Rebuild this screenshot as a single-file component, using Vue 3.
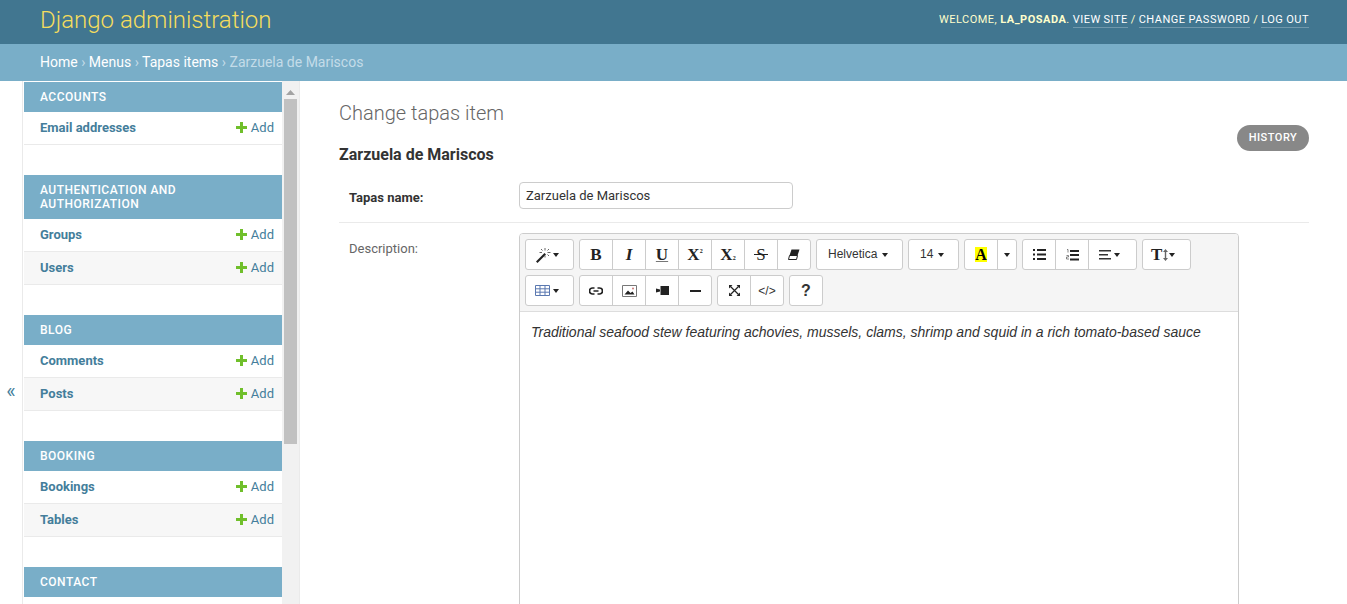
<script setup>
const modules = [
  { title: 'Accounts', rows: ['Email addresses'] },
  { title: 'Authentication and Authorization', rows: ['Groups', 'Users'] },
  { title: 'Blog', rows: ['Comments', 'Posts'] },
  { title: 'Booking', rows: ['Bookings', 'Tables'] },
  { title: 'Contact', rows: [] },
]
</script>

<template>
  <div class="page">
    <header class="top">
      <div class="brand">Django administration</div>
      <div class="tools">
        Welcome, <strong>la_posada</strong>.
        <a>View site</a> / <a>Change password</a> / <a>Log out</a>
      </div>
    </header>
    <nav class="crumbs">
      <a>Home</a><span class="sep"> › </span><a>Menus</a><span class="sep"> › </span><a>Tapas items</a><span class="sep"> › </span><span class="cur">Zarzuela de Mariscos</span>
    </nav>
    <div class="body">
      <div class="toggle"><span>«</span></div>
      <aside class="side">
        <div class="mods">
          <section v-for="m in modules" :key="m.title" class="mod">
            <h3>{{ m.title }}</h3>
            <div v-for="(r, i) in m.rows" :key="r" class="row" :class="{ alt: i % 2 === 1 }">
              <a class="name">{{ r }}</a>
              <a class="add">
                <svg width="11" height="11" viewBox="0 0 11 11"><path d="M4 0h3v4h4v3H7v4H4V7H0V4h4z" fill="#70bf2b"/></svg>
                Add
              </a>
            </div>
          </section>
        </div>
        <div class="scroll">
          <svg class="arrow" width="9" height="5" viewBox="0 0 9 5"><path d="M4.5 0L9 5H0z" fill="#a3a3a3"/></svg>
          <div class="thumb"></div>
        </div>
      </aside>
      <main class="main">
        <h1>Change tapas item</h1>
        <div class="titlebar">
          <h2>Zarzuela de Mariscos</h2>
          <a class="history">History</a>
        </div>
        <div class="frow first">
          <label class="req">Tapas name:</label>
          <input class="inp" value="Zarzuela de Mariscos" />
        </div>
        <div class="frow desc">
          <label>Description:</label>
          <div class="editor">
            <div class="bar">
              <div class="line">
                <div class="grp"><button class="b w49"><svg width="17" height="16" viewBox="0 0 17 16"><path d="M1 14.500L9.500 6l1.500 1.500L2.500 16z" fill="#222"/><path d="M10 1v2.500M10 8.500v2M4.500 5.500h2.500M12.500 5.500h3M6 2l1.500 1.500M14 2l-1.500 1.500M14 9l-1.500-1.500" stroke="#666" stroke-width="1" fill="none"/></svg><i class="caret m1"></i></button></div>
                <div class="grp">
                  <button class="b ser"><b>B</b></button>
                  <button class="b ser"><b><em>I</em></b></button>
                  <button class="b ser"><b class="ul">U</b></button>
                  <button class="b ser"><b>X</b><sup>2</sup></button>
                  <button class="b ser"><b>X</b><sub>2</sub></button>
                  <button class="b ser"><b class="st">S</b></button>
                  <button class="b"><svg width="12" height="11" viewBox="0 0 12 11"><path d="M3.500 0.500H11.500L9.500 6.500H1.500z" fill="#222"/><path d="M1.500 6.500H9.500L8.500 10.500H0.500z" fill="#fff" stroke="#222"/></svg></button>
                </div>
                <div class="grp"><button class="b w87 txt">Helvetica<i class="caret"></i></button></div>
                <div class="grp"><button class="b w51 txt">14<i class="caret"></i></button></div>
                <div class="grp">
                  <button class="b ser"><b class="hl">A</b></button>
                  <button class="b w19"><i class="caret m0"></i></button>
                </div>
                <div class="grp">
                  <button class="b"><svg width="13" height="11" viewBox="0 0 13 11"><path d="M0 0h2v2H0zM0 4.500h2v2H0zM0 9h2v2H0zM4 0h9v2H4zM4 4.500h9v2H4zM4 9h9v2H4z" fill="#222"/></svg></button>
                  <button class="b"><svg width="13" height="12" viewBox="0 0 13 12"><path d="M4 1h9v2H4zM4 5h9v2H4zM4 9.500h9v2H4z" fill="#222"/><path d="M1 0.500h1v3M0.500 6.500h2v1.500h-2v2h2.500" stroke="#555" stroke-width=".7" fill="none"/></svg></button>
                  <button class="b w49 al"><svg width="12" height="10" viewBox="0 0 12 10"><path d="M0 0h12v1.600H0zM0 4h9v1.600H0zM0 8h12v1.600H0z" fill="#333"/></svg><i class="caret"></i></button>
                </div>
                <div class="grp"><button class="b w49 ser tb"><b class="tt">T</b><svg width="5" height="12" viewBox="0 0 5 12"><path d="M2.500 0L5 3H3.200v6H5L2.500 12 0 9h1.800V3H0z" fill="#666"/></svg><i class="caret m1"></i></button></div>
              </div>
              <div class="line">
                <div class="grp"><button class="b w49"><svg width="15" height="11" viewBox="0 0 15 11"><path d="M.5.500h14v10H.5zM.5 3.800h14M.5 7.200h14M5 .500v10M10 .500v10" fill="none" stroke="#5a78b0"/></svg><i class="caret"></i></button></div>
                <div class="grp">
                  <button class="b"><svg width="14" height="8" viewBox="0 0 14 8"><path d="M5.500 1H3.500a3 3 0 000 6h2M8.500 1h2a3 3 0 010 6h-2M4.500 4h5" fill="none" stroke="#222" stroke-width="1.700"/></svg></button>
                  <button class="b"><svg width="15" height="12" viewBox="0 0 15 12"><path d="M.5.500h14v11H.5z" fill="#fff" stroke="#777"/><path d="M2.500 9.500L6 5.500l2.500 2.500 2-1.500 2 3z" fill="#222"/><circle cx="11" cy="3.500" r="1" fill="#c77"/></svg></button>
                  <button class="b"><svg width="13" height="9" viewBox="0 0 13 9"><path d="M4.500 0h8.500v9H4.500zM0 2.500l4 1v2l-4 1z" fill="#222"/></svg></button>
                  <button class="b"><svg width="11" height="2" viewBox="0 0 11 2"><path d="M0 0h11v2H0z" fill="#222"/></svg></button>
                </div>
                <div class="grp">
                  <button class="b"><svg width="11" height="11" viewBox="0 0 11 11"><path d="M1.500 1.500l8 8M9.500 1.500l-8 8" stroke="#222" stroke-width="1.200"/><path d="M0 0h3.500L0 3.500zM11 0v3.500L7.500 0zM0 11V7.500L3.500 11zM11 11H7.500L11 7.500z" fill="#222"/></svg></button>
                  <button class="b code">&lt;/&gt;</button>
                </div>
                <div class="grp"><button class="b w34 help">?</button></div>
              </div>
            </div>
            <div class="content">Traditional seafood stew featuring achovies, mussels, clams, shrimp and squid in a rich tomato-based sauce</div>
          </div>
        </div>
      </main>
    </div>
  </div>
</template>

<style>
html, body { margin: 0; height: 100%; overflow: hidden; background: #fff; }
</style>

<style scoped>
.page { height: 604px; overflow: hidden; display: flex; flex-direction: column; font-family: Roboto, "Liberation Sans", sans-serif; color: #333; font-size: 14px; }
.top { height: 44px; box-sizing: border-box; flex: none; background: #417690; display: flex; justify-content: space-between; align-items: center; padding: 0 38px 0 40px; }
.brand { font-size: 24px; font-weight: 300; color: #f5dd5d; line-height: 40px; margin-bottom: 4px; }
.tools { font-size: 11px; letter-spacing: .5px; word-spacing: -.3px; text-transform: uppercase; color: #ffc; margin-bottom: 5px; }
.tools strong { font-weight: 700; }
.tools a { color: #fff; border-bottom: 1px solid rgba(255,255,255,.25); padding-bottom: 1px; }
.crumbs { height: 37px; flex: none; box-sizing: border-box; background: #79aec8; padding: 0 40px; line-height: 36px; font-size: 14px; color: #c4dce8; white-space: pre; }
.crumbs a { color: #fff; }
.body { flex: 1; display: flex; min-height: 0; }
.toggle { width: 22px; flex: none; border-right: 1px solid #eaeaea; margin-right: 1px; display: flex; align-items: flex-start; justify-content: center; color: #447e9b; font-size: 20px; line-height: 24px; padding-top: 298px; box-sizing: content-box; }
.side { width: 275px; flex: none; border-right: 1px solid #eaeaea; display: flex; overflow: hidden; padding-top: 1px; }
.mods { width: 258px; flex: none; }
.mod { margin-bottom: 30px; }
.mod h3 { margin: 0; background: #79aec8; color: #fff; font-size: 12px; font-weight: 500; letter-spacing: .5px; text-transform: uppercase; line-height: 14px; padding: 8px 16px; }
.row { height: 33px; box-sizing: border-box; border-bottom: 1px solid #eaeaea; display: flex; justify-content: space-between; align-items: center; padding: 0 8px 2px 16px; font-size: 13px; color: #447e9b; }
.row.alt { background: #f7f7f7; }
.name { font-weight: 700; }
.add { display: flex; align-items: center; gap: 4px; }
.scroll { width: 17px; flex: none; background: #f1f1f1; margin-top: -1px; display: flex; flex-direction: column; align-items: flex-start; padding-top: 9px; box-sizing: border-box; }
.arrow { flex: none; margin: 0 0 4px 4px; }
.thumb { width: 13px; height: 345px; margin-left: 2px; background: #c1c1c1; flex: none; }
.main { flex: 1; padding: 20px 38px 0 39px; min-width: 0; }
h1 { margin: 0 0 10px; font-size: 20px; font-weight: 300; color: #666; line-height: 24px; }
.titlebar { display: flex; justify-content: space-between; align-items: flex-start; }
h2 { margin: 10px 0 0; font-size: 16px; font-weight: 700; color: #333; line-height: 20px; }
.history { margin-top: -10px; height: 26px; padding-bottom: 2px; box-sizing: border-box; width: 72px; border-radius: 13px; background: #888; color: #fff; font-size: 11px; font-weight: 500; letter-spacing: .5px; text-transform: uppercase; display: flex; align-items: center; justify-content: center; }
.frow { display: flex; padding: 0 0 0 10px; font-size: 13px; }
.frow label { width: 170px; flex: none; }
.first { margin-top: 17px; padding-bottom: 13px; border-bottom: 1px solid #eaeaea; align-items: center; height: 27px; }
.req { font-weight: 700; color: #333; padding-top: 4px; }
.inp { width: 274px; height: 27px; box-sizing: border-box; border: 1px solid #ccc; border-radius: 4px; padding: 0 6px; font: 13px Roboto, sans-serif; color: #333; outline: none; }
.desc { padding-top: 10px; }
.desc label { color: #666; padding-top: 8px; }
.editor { width: 720px; height: 400px; box-sizing: border-box; border: 1px solid #ccc; border-radius: 4px 4px 0 0; flex: none; }
.bar { background: #f5f5f5; border-bottom: 1px solid #ddd; padding: 5px; height: 78px; box-sizing: border-box; display: flex; flex-direction: column; gap: 5px; border-radius: 3px 3px 0 0; }
.line { display: flex; gap: 5px; }
.grp { display: flex; height: 31px; border: 1px solid #ccc; border-radius: 3px; background: #fff; overflow: hidden; box-sizing: border-box; }
.b { all: unset; box-sizing: border-box; width: 33px; height: 100%; display: flex; align-items: center; justify-content: center; font: 14px "Liberation Sans", sans-serif; color: #333; border-left: 1px solid #ccc; }
.b:first-child { border-left: 0; width: 32px; }
.b.w49 { width: 48px; justify-content: flex-start; padding-left: 9px; }
.b.w49:first-child { width: 47px; }
.b.al { padding-left: 10px; }
.b.tb { padding-left: 8px; }
.w87, .b.w87:first-child { width: 85px; justify-content: flex-start; padding-left: 11px; }
.w51, .b.w51:first-child { width: 49px; justify-content: flex-start; padding-left: 11px; }
.w19 { width: 19px; }
.w34, .b.w34:first-child { width: 32px; }
.caret { display: inline-block; width: 0; height: 0; border: 3px solid transparent; border-top: 4px solid #222; border-bottom: 0; margin-left: 3px; }
.caret.m0 { margin-left: 0; }
.caret.m1 { margin-left: 1px; }
.txt { font-size: 12px; color: #333; padding-bottom: 2px; }
.txt .caret { margin-left: 5px; margin-top: 2px; }
.ser { font: 14px "Liberation Serif", serif; color: #222; }
.ser b { font-size: 17px; line-height: 1; }
.ser sup, .ser sub { font-size: 6px; line-height: 1; font-weight: 700; }
.ser sup { align-self: flex-start; margin-top: 8px; }
.ser sub { align-self: flex-end; margin-bottom: 8px; }
.ul { text-decoration: underline; text-decoration-color: #777; }
.st { position: relative; font-weight: 400; }
.st::after { content: ""; position: absolute; left: -2px; right: -2px; top: 8px; height: 1px; background: #222; }
.hl { background: #ff0; width: 12px; text-align: center; line-height: 15px; height: 15px; color: #000; font-size: 16px !important; }
.tt { font-size: 17px; margin-right: 1px; }
.code { font-size: 12px; }
.help { font-weight: 700; font-size: 16px; }
.content { padding: 10px 11px; font: italic 14px/20px "Liberation Sans", sans-serif; color: #333; }
</style>
